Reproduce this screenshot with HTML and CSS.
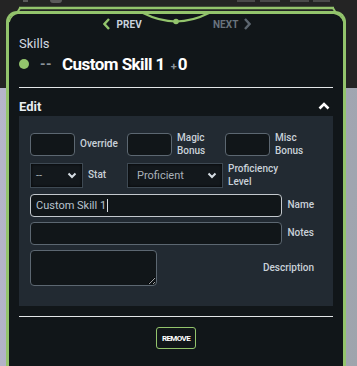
FILE: index.html
```html
<!DOCTYPE html>
<html>
<head>
<meta charset="utf-8">
<link rel="stylesheet" href="styles.css">
</head>
<body>
<div class="topbar">
  <span class="tb tb1"></span><span class="tb tb2"></span>
  <span class="tbr tbr1"></span><span class="tbr tbr2"></span><span class="tbr tbr3"></span><span class="tbr tbr4"></span>
</div>
<div class="panel">
  <nav class="nav">
    <a class="nav-btn prev"><svg width="7" height="12" viewBox="0 0 7 12"><path d="M6 1 L1.5 6 L6 11" fill="none" stroke="#93c46c" stroke-width="2.4"/></svg><span>PREV</span></a>
    <a class="nav-btn next"><span>NEXT</span><svg width="7" height="12" viewBox="0 0 7 12"><path d="M1 1 L5.5 6 L1 11" fill="none" stroke="#5c666f" stroke-width="2.4"/></svg></a>
  </nav>
  <div class="category">Skills</div>
  <div class="skill-row">
    <span class="dot"></span>
    <span class="dash">--</span>
    <span class="skill-name">Custom Skill 1</span>
    <span class="bonus"><span class="plus">+</span>0</span>
  </div>
  <div class="rule"></div>
  <div class="edit-head">
    <span>Edit</span>
    <svg width="12" height="8" viewBox="0 0 12 8"><path d="M1.5 6.5 L6 2 L10.5 6.5" fill="none" stroke="#ffffff" stroke-width="2.6"/></svg>
  </div>
  <div class="edit-box">
    <div class="row row1">
      <div class="field f1"><input class="box-in" type="text"><label>Override</label></div>
      <div class="field f2"><input class="box-in" type="text"><label>Magic<br>Bonus</label></div>
      <div class="field f3"><input class="box-in" type="text"><label>Misc<br>Bonus</label></div>
    </div>
    <div class="row row2">
      <div class="field s1">
        <div class="sel sel-small"><span>--</span><svg width="10" height="7" viewBox="0 0 10 7"><path d="M1.5 1.5 L5 5 L8.5 1.5" fill="none" stroke="#d6dde4" stroke-width="2"/></svg></div>
        <label>Stat</label>
      </div>
      <div class="field s2">
        <div class="sel sel-big"><span>Proficient</span><svg width="10" height="7" viewBox="0 0 10 7"><path d="M1.5 1.5 L5 5 L8.5 1.5" fill="none" stroke="#d6dde4" stroke-width="2"/></svg></div>
        <label>Proficiency<br>Level</label>
      </div>
    </div>
    <div class="line-row name-row">
      <div class="wide-in active"><span>Custom Skill 1</span><i class="caret"></i></div>
      <label>Name</label>
    </div>
    <div class="line-row notes-row">
      <div class="wide-in"></div>
      <label>Notes</label>
    </div>
    <div class="line-row desc-row">
      <textarea class="ta"></textarea>
      <label>Description</label>
    </div>
  </div>
  <div class="rule rule2"></div>
  <div class="actions"><button class="remove">REMOVE</button></div>
</div>
<svg class="deco" width="357" height="30" viewBox="0 0 357 30">
  <path d="M19 8 L334 8" stroke="#93c46c" stroke-width="2.5" fill="none"/>
  <path d="M20 8 L17 13" stroke="#93c46c" stroke-width="2" fill="none"/>
  <path d="M333 8 L336 13" stroke="#93c46c" stroke-width="2" fill="none"/>
  <path d="M9 22 Q11 14 19 13" stroke="#93c46c" stroke-width="1.6" fill="none"/>
  <path d="M333 13 Q341 14 344 22" stroke="#93c46c" stroke-width="1.6" fill="none"/>
  <path d="M143 13 Q160 21.5 176 21.5 Q192 21.5 209 13" stroke="#93c46c" stroke-width="2" fill="none"/>
  <circle cx="176" cy="21.5" r="2.8" fill="#93c46c"/>
</svg>
</body>
</html>
```

FILE: styles.css
```css
* { box-sizing: border-box; }
html, body { margin: 0; padding: 0; }
body {
  width: 357px;
  height: 366px;
  overflow: hidden;
  position: relative;
  font-family: Roboto, "Liberation Sans", sans-serif;
  background:
    linear-gradient(to bottom, #242424 0, #242424 88px, transparent 88px),
    linear-gradient(100deg, #b7b7cb 0%, #a9aabf 50%, #9ea4ac 100%);
}
.topbar {
  position: absolute;
  top: 0; left: 0; width: 357px; height: 4px;
}
.tb, .tbr { position: absolute; top: 0; height: 2px; background: #4a4a4a; }
.tb1 { left: 23px; width: 5px; background: #5a5a5a; }
.tb2 { left: 50px; width: 12px; height: 3px; border-radius: 0 0 6px 6px; background: #5a5a5a; }
.tbr1 { left: 237px; width: 18px; }
.tbr2 { left: 260px; width: 20px; }
.tbr3 { left: 290px; width: 19px; }
.tbr4 { left: 313px; width: 17px; }

.panel {
  margin: 11px 0 0 6px;
  width: 340px;
  height: 370px;
  background: #111619;
  border: 3px solid #93c46c;
  border-bottom: none;
  border-radius: 11px 11px 0 0;
  padding: 0 10px;
}
.deco { position: absolute; top: 0; left: 0; pointer-events: none; }

.nav {
  height: 20px;
  display: flex;
  justify-content: center;
  align-items: center;
  gap: 71px;
  padding-left: 2px;
}
.nav-btn {
  display: flex;
  align-items: center;
  gap: 6px;
  font-size: 10px;
  font-weight: 700;
  letter-spacing: 0.1px;
}
.prev { color: #c9d3de; }
.next { color: #69737d; gap: 5px; }

.category {
  margin-top: 2px;
  font-size: 13px;
  line-height: 16px;
  color: #d1d9e1;
}
.skill-row {
  margin-top: 2px;
  height: 20px;
  display: flex;
  align-items: center;
}
.dot {
  width: 10px; height: 10px;
  border-radius: 50%;
  background: #93c46c;
}
.dash {
  margin-left: 11px;
  color: #8a9399;
  font-size: 14px;
  font-weight: 700;
  letter-spacing: 0.5px;
}
.skill-name {
  margin-left: 10px;
  font-size: 17px;
  font-weight: 700;
  color: #ffffff;
  letter-spacing: -0.55px;
}
.bonus {
  margin-left: 6px;
  font-size: 17px;
  font-weight: 700;
  color: #ffffff;
}
.plus {
  font-size: 11px;
  color: #8a9399;
  font-weight: 700;
  margin-right: 1px;
}
.rule {
  margin-top: 13px;
  height: 1px;
  background: #e3e6e8;
}
.edit-head {
  margin-top: 10px;
  height: 16px;
  display: flex;
  justify-content: space-between;
  align-items: center;
  padding-right: 3px;
  font-size: 13px;
  font-weight: 700;
  color: #e8edf2;
}
.edit-box {
  margin-top: 2px;
  background: #222a32;
  padding: 17px 19px 20px 11px;
  display: flex;
  flex-direction: column;
}
.row { display: flex; }
.field { display: flex; align-items: center; gap: 5px; }
label {
  font-size: 10px;
  font-weight: 500;
  line-height: 12.5px;
  color: #c9d1d9;
}
.row1 { height: 23px; }
.f1 { width: 97px; }
.f2 { width: 98px; }
.box-in {
  width: 45px;
  height: 23px;
  background: #111619;
  border: 1px solid #5c6771;
  border-radius: 4px;
  margin: 0;
  padding: 0;
}
.row2 { margin-top: 7px; height: 25px; }
.s1 { width: 97px; }
.sel {
  height: 25px;
  display: flex;
  align-items: center;
  justify-content: space-between;
  background: #13181c;
  border: 1px solid #3e4953;
  box-shadow: inset 0 0 3px #000;
  font-size: 11px;
  color: #a9b1b9;
}
.sel-small { width: 53px; padding: 0 5px 0 5px; }
.sel-big { width: 96px; padding: 0 5px 0 9px; }
.line-row {
  display: flex;
  align-items: center;
  justify-content: space-between;
}
.name-row { margin-top: 6px; height: 23px; }
.notes-row { margin-top: 5px; height: 23px; }
.desc-row { margin-top: 5px; height: 36px; }
.wide-in {
  width: 252px;
  height: 23px;
  background: #111619;
  border: 1px solid #5c6771;
  border-radius: 4px;
  display: flex;
  align-items: center;
  padding-left: 5px;
  font-size: 11px;
  color: #b9c4cf;
}
.wide-in.active { border-color: #c3c8cd; }
.caret {
  display: inline-block;
  width: 1px;
  height: 13px;
  background: #d9dde1;
  margin-left: 1px;
}
.ta {
  display: block;
  width: 127px;
  height: 36px;
  background: #111619;
  border: 1px solid #5c6771;
  border-radius: 4px;
  margin: 0;
  padding: 0;
  resize: both;
}
.rule2 { margin-top: 10px; }
.actions {
  margin-top: 10px;
  display: flex;
  justify-content: center;
}
.remove {
  display: block;
  width: 40px;
  height: 22px;
  background: transparent;
  border: 1px solid #93c46c;
  border-radius: 3px;
  color: #ffffff;
  font-family: Roboto, sans-serif;
  font-size: 8px;
  font-weight: 700;
  letter-spacing: -0.6px;
  padding: 0;
}
```
